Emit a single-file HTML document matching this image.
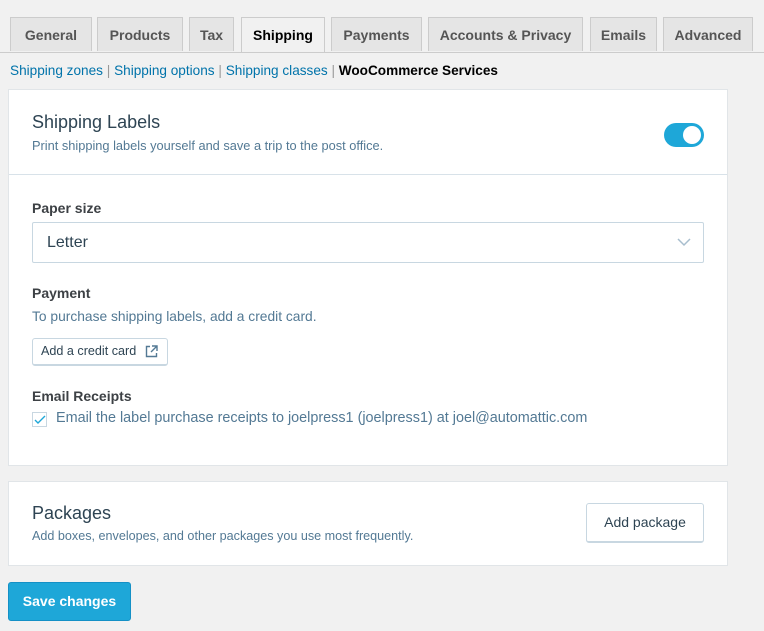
<!DOCTYPE html>
<html><head><style>
body{margin:0;background:#f1f1f1;font-family:"Liberation Sans",sans-serif;width:764px;height:631px;position:relative;overflow:hidden;color:#23282d}
.tab{position:absolute;top:17px;height:34px;background:#e5e5e5;border:1px solid #ccc;border-bottom:none;box-sizing:border-box;font-size:14px;font-weight:bold;color:#555;text-align:center;line-height:34px}
.tab.on{background:#f1f1f1;color:#000;height:36px}
.line{position:absolute;top:52px;left:0;width:764px;border-top:1px solid #ccc}
.sub{position:absolute;top:63px;left:10px;font-size:13.6px;color:#999}
.sub a{color:#0073aa;text-decoration:none}
.card{position:absolute;left:8px;width:720px;background:#fff;border:1px solid #e1e5e8;box-sizing:border-box}
.abs{position:absolute}
</style></head><body>
<div class="tab" style="left:10px;width:82px">General</div>
<div class="tab" style="left:97px;width:86px">Products</div>
<div class="tab" style="left:189px;width:45px">Tax</div>
<div class="tab on" style="left:241px;width:84px">Shipping</div>
<div class="tab" style="left:331px;width:91px">Payments</div>
<div class="tab" style="left:428px;width:155px">Accounts &amp; Privacy</div>
<div class="tab" style="left:590px;width:67px">Emails</div>
<div class="tab" style="left:663px;width:90px">Advanced</div>
<div class="line"></div>
<div class="sub"><a>Shipping zones</a> | <a>Shipping options</a> | <a>Shipping classes</a> | <b style="color:#000">WooCommerce Services</b></div>

<div class="card" style="top:89px;height:377px">
 <div class="abs" style="left:23px;top:22px;font-size:18px;color:#2e4453">Shipping Labels</div>
 <div class="abs" style="left:23px;top:48px;font-size:12.8px;color:#537994">Print shipping labels yourself and save a trip to the post office.</div>
 <div class="abs" style="left:655px;top:33px;width:40px;height:24px;border-radius:12px;background:#1ea7d8"><div class="abs" style="left:19px;top:3px;width:18px;height:18px;border-radius:50%;background:#fff"></div></div>
 <div class="abs" style="left:0;top:84px;width:718px;border-top:1px solid #d8e2e9"></div>
 <div class="abs" style="left:23px;top:110px;font-size:14px;font-weight:bold;color:#3d4145">Paper size</div>
 <div class="abs" style="left:23px;top:132px;width:672px;height:41px;border:1px solid #c8d7e1;border-radius:2px;box-sizing:border-box;font-size:16px;line-height:39px;padding-left:14px;color:#2e4453">Letter
  <svg class="abs" style="right:12px;top:15px" width="14" height="9"><path d="M1 1l6 6 6-6" stroke="#a8bece" stroke-width="1.5" fill="none"/></svg></div>
 <div class="abs" style="left:23px;top:195px;font-size:14px;font-weight:bold;color:#3d4145">Payment</div>
 <div class="abs" style="left:23px;top:219px;font-size:13.8px;color:#537994">To purchase shipping labels, add a credit card.</div>
 <div class="abs" style="left:23px;top:248px;width:136px;height:28px;border:1px solid #c8d7e1;border-bottom-width:2px;border-radius:3px;box-sizing:border-box;font-size:12.6px;line-height:25px;padding-left:8px;color:#2e4453">Add a credit card
  <svg class="abs" style="left:112px;top:6px" width="13" height="13"><path d="M5 1.5H1.5v10h10V8M7 1h5v5M12 1L6 7" stroke="#537994" stroke-width="1.4" fill="none"/></svg></div>
 <div class="abs" style="left:23px;top:298px;font-size:14px;font-weight:bold;color:#3d4145">Email Receipts</div>
 <div class="abs" style="left:23px;top:322px;width:15px;height:15px;border:1px solid #c8d7e1;box-sizing:border-box"><svg class="abs" style="left:1px;top:2px" width="12" height="10"><path d="M1 5l3 3 7-7" stroke="#1ea7d8" stroke-width="1.4" fill="none"/></svg></div>
 <div class="abs" style="left:47px;top:320px;font-size:14.4px;color:#537994">Email the label purchase receipts to joelpress1 (joelpress1) at joel@automattic.com</div>
</div>

<div class="card" style="top:481px;height:85px">
 <div class="abs" style="left:23px;top:21px;font-size:18px;color:#2e4453">Packages</div>
 <div class="abs" style="left:23px;top:47px;font-size:12.6px;color:#537994">Add boxes, envelopes, and other packages you use most frequently.</div>
 <div class="abs" style="left:577px;top:21px;width:118px;height:40px;border:1px solid #c8d7e1;border-bottom-width:2px;border-radius:3px;box-sizing:border-box;font-size:14px;line-height:37px;text-align:center;color:#2e4453">Add package</div>
</div>

<div class="abs" style="left:8px;top:582px;width:123px;height:39px;background:#1ea7d8;border:1px solid #1490c6;border-radius:3px;box-sizing:border-box;color:#fff;font-weight:bold;font-size:14px;line-height:36px;text-align:center">Save changes</div>
</body></html>
